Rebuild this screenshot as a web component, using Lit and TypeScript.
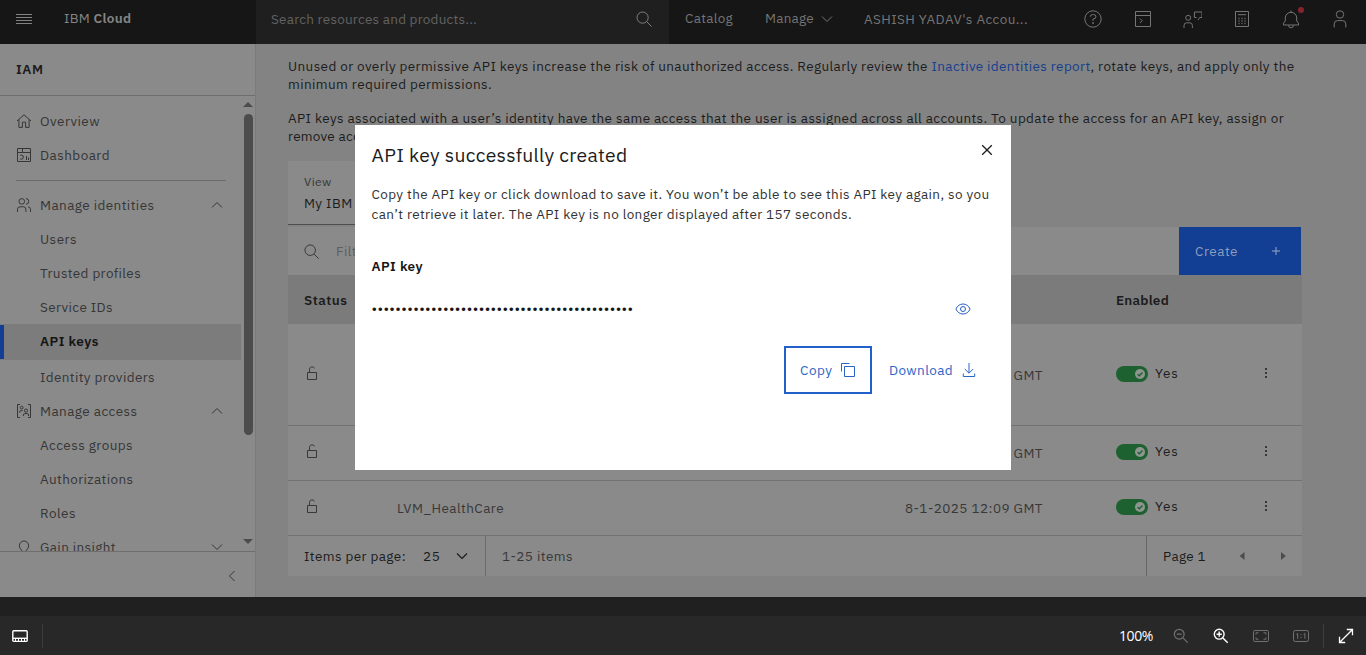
import { LitElement, html, svg, css, nothing } from "lit";
import { customElement, property } from "lit/decorators.js";

/** Inline label whose tracking is adjusted so the text spans a given width. */
@customElement("fit-text")
class FitText extends LitElement {
  @property() text = "";
  @property({ type: Number }) w = 0;
  static styles = css`
    :host { display: inline-block; white-space: pre; }
  `;
  firstUpdated() {
    const span = this.renderRoot.querySelector("span")!;
    const natural = span.getBoundingClientRect().width;
    const n = [...this.text].length;
    if (this.w) span.style.letterSpacing = `${((this.w - natural) / n).toFixed(4)}px`;
  }
  render() {
    return html`<span>${this.text}</span>`;
  }
}

const t = (text: string, w: number, cls = "") =>
  html`<fit-text class=${cls} .text=${text} .w=${w}></fit-text>`;

const shapes: Record<string, unknown> = {
  menu: svg`<path d="M0 2.5h16M0 5.5h16M0 8.5h16M0 11.5h16" />`,
  search: svg`<circle cx="6.6" cy="6.6" r="5.6"/><path d="M10.7 10.7L15.6 15.6"/>`,
  down: svg`<path d="M3 5.5l5 5 5-5"/>`,
  up: svg`<path d="M3 10.5l5-5 5 5"/>`,
  left: svg`<path d="M10.5 3l-5 5 5 5"/>`,
  close: svg`<path d="M3.2 3.2l9.6 9.6M12.8 3.2L3.2 12.8"/>`,
  plus: svg`<path d="M8 4v8M4 8h8"/>`,
  help: svg`<circle cx="10" cy="10" r="8.2"/><path d="M7.4 8V7.4A1.9 1.9 0 0 1 9.3 5.6h1.5a1.9 1.9 0 0 1 0 4.2H10v2"/><circle cx="10" cy="14" r=".5" fill="currentColor"/>`,
  shell: svg`<path d="M2.5 2.5h15v15h-15zM2.5 6.5h15M7 9.5l2.2 2.2L7 13.9"/>`,
  feedback: svg`<circle cx="6.2" cy="8.8" r="2.5"/><path d="M2 19v-2.500a2.700 2.700 0 0 1 2.700-2.700h3a2.700 2.700 0 0 1 2.700 2.700V19M14.500 8.500h-2.100v-5.500h7.600v5.500h-2.300l-1.700 2.600"/>`,
  calc: svg`<path d="M3.500 2.500h13v15h-13zM6 5.700h8"/><path d="M6.500 9.500h1M9.500 9.500h1M12.500 9.500h1M6.500 12h1M9.500 12h1M12.500 12h1M6.500 14.500h1M9.500 14.500h1M12.500 14.500h1" stroke-width="1.300"/>`,
  bell: svg`<path d="M10 1.500v2M2.500 16h15v-1.800L15.700 12V9a5.700 5.700 0 0 0-11.400 0v3l-1.800 2.200zM7.600 16v.4a2.400 2.400 0 0 0 4.800 0V16"/>`,
  user: svg`<circle cx="10" cy="5.500" r="3.700"/><path d="M4.200 18.500V15a3.400 3.400 0 0 1 3.400-3.400h4.800a3.400 3.400 0 0 1 3.400 3.400v3.500"/>`,
  home: svg`<path d="M1 8l7-6.200L15 8M2.900 6.500v7.900h3.500V9.200h3.200v5.200h3.500V6.500"/>`,
  dash: svg`<path d="M1.500 1.500h13v13h-13zM1.500 5.500h13M6.500 1.500v4M10.500 9v4M12.500 10.500V13M4 8.200h1.500a1.900 1.900 0 0 1 0 3.900H4.200"/>`,
  users: svg`<circle cx="5.800" cy="4.400" r="2.800"/><path d="M1.500 15v-2.700a2.500 2.500 0 0 1 2.500-2.500h3.400a2.500 2.500 0 0 1 2.500 2.500V15M10 1.600a2.800 2.800 0 0 1 0 5.600M12 9.800a2.600 2.600 0 0 1 2.500 2.500V15"/>`,
  access: svg`<path d="M4 1.500H1.500v13H4M12 1.500h2.500v13H12"/><circle cx="5.700" cy="4.600" r="1.400"/><path d="M3.600 9.700V8.900a1.200 1.200 0 0 1 1.200-1.200h1.700"/><circle cx="10" cy="7.600" r="1.600"/><path d="M7.400 13v-1a1.400 1.400 0 0 1 1.400-1.400h2.400a1.400 1.400 0 0 1 1.400 1.400v1"/>`,
  idea: svg`<path d="M5.700 12.300V11.200C4.300 9.900 3.400 8.700 3.400 6.600a4.600 4.600 0 0 1 9.200 0c0 2.100-.9 3.300-2.300 4.600v1.100M6 14h4"/>`,
  lock: svg`<path d="M3.500 7.500h9v7h-9zM5.500 7.500V4.200a2.600 2.600 0 0 1 5-.8"/>`,
  kebab: svg`<path d="M7 3h2v2H7zM7 7h2v2H7zM7 11h2v2H7z" fill="currentColor" stroke="none"/>`,
  caretL: svg`<path d="M10.500 4v8L5.700 8z" fill="currentColor" stroke="none"/>`,
  caretR: svg`<path d="M6 4v8l4.800-4z" fill="currentColor" stroke="none"/>`,
  eye: svg`<path d="M.9 8C2.300 4.800 4.900 3 8 3s5.700 1.800 7.100 5c-1.400 3.200-4 5-7.100 5S2.300 11.200.9 8z"/><circle cx="8" cy="8" r="2.500"/>`,
  copy: svg`<path d="M4.500 4.500h10v10h-10zM1.500 9.500v-8h8"/>`,
  download: svg`<path d="M8 1v10M3.800 7L8 11.200 12.200 7M2.300 11.500v3h11.400v-3"/>`,
  film: svg`<rect x=".8" y="2.800" width="14.400" height="10.600" rx="1"/><path d="M1 10.300h14"/><path d="M3.500 10.500v3M6.500 10.500v3M9.500 10.500v3M12.500 10.500v3" stroke-width="1"/>`,
  zoomOut: svg`<circle cx="6.200" cy="6.200" r="4.900"/><path d="M9.900 9.900l4.800 4.800M3.800 6.200h4.800"/>`,
  zoomIn: svg`<circle cx="6.200" cy="6.200" r="4.900"/><path d="M9.900 9.900l4.800 4.800M3.600 6.200h5.200M6.200 3.600v5.200"/>`,
  fit: svg`<rect x=".5" y="2.500" width="15" height="11" rx="1.200"/><path d="M3 6.500V4.800h2.500M10.500 4.800H13v1.700M13 9.500v1.700h-2.500M5.500 11.200H3V9.500"/>`,
  actual: svg`<rect x=".5" y="2.500" width="15" height="11" rx="1.800"/><path d="M3.400 6.300l1.300-.8v5.200M10.600 6.300l1.300-.8v5.200"/><path d="M7.500 6.200h1v1h-1zM7.500 9h1v1h-1z" fill="currentColor" stroke="none"/>`,
  expand: svg`<path d="M2 14L14.300 1.700M8.800 1.500h5.700v5.700M1.500 8.800v5.700h5.700"/>`,
};
const icon = (name: string, size = 16, cls = "", sw = 1, box = size === 20 ? 20 : 16) =>
  html`<svg class="ic ${cls}" width=${size} height=${size} viewBox="0 0 ${box} ${box}" fill="none" stroke="currentColor" stroke-width=${sw}>${shapes[name]}</svg>`;

type Nav = { label: string; w: number; icon?: string; chev?: string; active?: boolean };
const top: Nav[] = [
  { label: "Overview", w: 60, icon: "home" },
  { label: "Dashboard", w: 70, icon: "dash" },
];
const groups: Nav[] = [
  { label: "Manage identities", w: 114.5, icon: "users", chev: "up" },
  { label: "Users", w: 37 },
  { label: "Trusted profiles", w: 101 },
  { label: "Service IDs", w: 73 },
  { label: "API keys", w: 59, active: true },
  { label: "Identity providers", w: 115 },
  { label: "Manage access", w: 97.5, icon: "access", chev: "up" },
  { label: "Access groups", w: 93 },
  { label: "Authorizations", w: 93.5 },
  { label: "Roles", w: 36 },
  { label: "Gain insight", w: 76, icon: "idea", chev: "down" },
];
const rows = ["Healthcare_API", "LVM_Service", "LVM_HealthCare"];

@customElement("app-root")
class AppRoot extends LitElement {
  static styles = css`
    :host { display: block; width: 1366px; height: 655px; overflow: hidden; position: relative;
      font-family: "IBM Plex Sans", "Noto Sans", sans-serif; font-size: 13.5px; line-height: 18px; color: #1c1c1c; background: #202020; }
    * { box-sizing: border-box; }
    .ic { display: block; flex: none; }
    .page { height: 597px; display: flex; flex-direction: column; background: #838383; }
    .top { height: 44px; flex: none; display: flex; background: #161616; color: #757575; }
    .brand { width: 256px; display: flex; padding: 10px 0 0 16px; line-height: 17px; }
    .brand .ic { margin: 2px 32px 0 0; color: #828282; }
    .brand b { font-weight: 600; }
    .brand fit-text { color: #858585; }
    .find { width: 413px; background: #1f1f1f; padding: 10px 17px 0 15px; display: flex; justify-content: space-between; color: #626262; }
    .find .ic { color: #808080; margin-top: 1px; }
    .links { flex: 1; display: flex; padding: 9px 0 0 16px; }
    .links .acct { margin: 1px 0 0 29px; }
    .links .ic { margin: 2px 0 0 5px; }
    .mng { margin-left: 32px; }
    .tools { width: 292px; display: grid; grid-template-columns: 50px 49px 50px 49px 49px 20px; padding: 9px 0 0 9px; }
    .bellbox { position: relative; width: 20px; }
    .dot { position: absolute; right: -3px; top: -2px; width: 6px; height: 6px; border-radius: 50%; background: #84252b; }
    .body { flex: 1; display: flex; min-height: 0; }
    .side { width: 256px; background: #8a8a8a; border-right: 1px solid #7a7a7a; display: flex; flex-direction: column; color: #363636; }
    .sidehead { height: 52px; flex: none; border-bottom: 1px solid #6e6e6e; padding: 16px; font-weight: 600; color: #1c1c1c; }
    .navwrap { flex: 1; min-height: 0; display: flex; overflow: hidden; }
    .nav { width: 241px; padding-top: 8px; }
    .row { height: 34px; display: flex; align-items: center; padding: 0 16px; }
    .row .slot { width: 24px; flex: none; }
    .row .chev { margin-left: auto; }
    .row.active { height: 36px; background: #7c7c7c; color: #141414; font-weight: 600; padding-left: 0; }
    .row.active .bar { width: 4px; height: 34px; background: #123f94; margin-right: 36px; }
    .row.active fit-text { margin-bottom: 2px; }
    .sep { height: 1px; background: #6c6c6c; margin: 8px 15px 7px 16px; }
    .scroll { width: 14px; display: flex; flex-direction: column; align-items: center; padding: 6px 0 7px; }
    .tri { border: 5px solid transparent; border-top: 0; border-bottom: 5px solid #4c4c4c; }
    .tri.d { border-top: 5px solid #4c4c4c; border-bottom: 0; margin-top: auto; }
    .thumb { width: 9px; height: 321px; border-radius: 5px; background: #4c4c4c; margin-top: 7px; }
    .sidefoot { height: 46px; flex: none; border-top: 1px solid #6e6e6e; display: flex; justify-content: flex-end; align-items: center; padding: 2px 15px 0 0; }
    .main { flex: 1; padding: 13px 64px 0 32px; display: flex; flex-direction: column; }
    .para { height: 36px; margin-bottom: 16px; white-space: nowrap; flex: none; }
    .line { display: flex; height: 18px; }
    .link { color: #163f8f; }
    .view { width: 300px; height: 64px; flex: none; background: #8a8a8a; border-bottom: 1px solid #4e4e4e; padding: 12px 16px; margin-bottom: 2px; }
    .view small { display: block; font-size: 12px; height: 21px; color: #363636; }
    .bar2 { height: 48px; background: #8a8a8a; display: flex; align-items: center; padding-left: 16px; margin-right: 1px; flex: none; color: #5f5f5f; }
    .bar2 .ic { color: #333; margin-right: 17px; }
    .create { margin-left: auto; width: 122px; height: 48px; background: #123f94; color: #8d9dbd; display: flex; align-items: center; justify-content: space-between; padding: 0 17px 0 16px; }
    .create .ic { margin: 0; color: #98a6c4; }
    .grid { display: grid; grid-template-columns: 93px 508px 211px 142px 60px; align-items: center; background: #8a8a8a; padding-left: 16px; border-bottom: 1px solid #727272; height: 55px; color: #383838; flex: none; width: 1014px; }
    .grid fit-text, .grid .ic { display: block; }
    .grid.head { height: 49px; background: #7b7b7b; border: 0; font-weight: 600; color: #1c1c1c; }
    .grid.tall { height: 102px; }
    .up3 { margin-bottom: 5px; }
    .tall .up3 { margin-bottom: 3px; }
    .sw { display: flex; align-items: center; color: #1e1e1e; margin-bottom: 2px; }
    .sw fit-text { margin: -3px 0 0 7px; }
    .tall .sw fit-text { margin-top: -1px; }
    .toggle { width: 32px; height: 16px; border-radius: 8px; background: #1d6130; display: flex; justify-content: flex-end; padding: 3px; }
    .knob { width: 10px; height: 10px; border-radius: 50%; background: #8e958f; display: flex; }
    .pager { width: 1014px; height: 40px; flex: none; background: #8a8a8a; display: flex; line-height: 40px; padding-left: 16px; }
    .pager .ic { margin-top: 12px; }
    .per { width: 182px; display: flex; border-right: 1px solid #6c6c6c; }
    .per .n { margin-left: 17px; }
    .per .ic { margin-left: 13px; }
    .cnt { color: #383838; flex: 1; padding-left: 16px; }
    .pg { width: 156px; border-left: 1px solid #666; padding-left: 16px; display: flex; }
    .pg .ic { color: #4b4b4b; margin-left: 28px; }
    .pg .ic + .ic { margin-left: 25px; }

    .modal { position: absolute; left: 355px; top: 125px; width: 656px; height: 345px; background: #fff; padding: 16px 16px 0 16.5px; color: #323232; }
    .mhead { display: flex; justify-content: space-between; height: 43px; color: #1c1c1c; }
    .mhead .title { font-size: 19.3px; line-height: 28px; }
    .mhead .ic { margin-top: 1px; }
    .mtext { line-height: 20px; height: 40px; }
    .mtext fit-text { display: block; }
    .mlabel { font-weight: 600; color: #161616; margin-top: 33px; height: 18px; }
    .secret { display: flex; justify-content: space-between; align-items: center; height: 20px; margin-top: 24px; padding-right: 24px; color: #2460c4; }
    .secret fit-text { color: #161616; font-size: 14px; }
    .acts { display: flex; justify-content: flex-end; margin-top: 27px; padding-right: 18px; color: #2a65c8; }
    .btn { height: 48px; display: flex; align-items: center; }
    .btn .ic { margin-left: 8px; }
    .btn.focus { width: 88px; border: 2px solid #2460cc; padding-left: 14px; margin-right: 17px; }
    .btn.focus .ic { margin-left: 7px; }

    .view-bar { height: 58px; border-top: 19px solid #202020; background: #282828; display: flex; align-items: center; color: #fff; padding: 1px 12px 0; }
    .view-bar .vs { width: 1px; height: 24px; background: #3e3e3e; margin-left: 14px; }
    .view-bar .right { margin-left: auto; display: flex; align-items: center; font-family: "Open Sans", sans-serif; font-size: 14px; }
    .view-bar .right .ic { margin-left: 24px; }
    .view-bar .right .ic.first { margin-left: 20px; }
    .view-bar .dim { color: #717171; }
    .view-bar .right .vs { margin-left: 14px; }
    .view-bar .right .vs + .ic { margin-left: 14px; }
  `;

  nav(i: Nav) {
    return html`<div class="row ${i.active ? "active" : ""}">
      ${i.active ? html`<div class="bar"></div>` : html`<div class="slot">${i.icon ? icon(i.icon) : nothing}</div>`}
      ${t(i.label, i.w)}${i.chev ? icon(i.chev, 16, "chev") : nothing}
    </div>`;
  }

  render() {
    return html`
      <div class="page">
        <header class="top">
          <div class="brand">${icon("menu")}${t("IBM ", 29.5)}<b>${t("Cloud", 38)}</b></div>
          <div class="find">${t("Search resources and products...", 206)}${icon("search")}</div>
          <div class="links">${t("Catalog", 48)}<span class="mng">${t("Manage", 49)}</span>${icon("down")}${t("ASHISH YADAV's Accou...", 164, "acct")}</div>
          <div class="tools">
            ${icon("help", 20)}${icon("shell", 20)}${icon("feedback", 20)}${icon("calc", 20)}
            <div class="bellbox">${icon("bell", 20)}<i class="dot"></i></div>${icon("user", 20)}
          </div>
        </header>
        <div class="body">
          <aside class="side">
            <div class="sidehead">${t("IAM", 27.5)}</div>
            <div class="navwrap">
              <nav class="nav">${top.map((i) => this.nav(i))}<div class="sep"></div>${groups.map((i) => this.nav(i))}</nav>
              <div class="scroll"><i class="tri"></i><i class="thumb"></i><i class="tri d"></i></div>
            </div>
            <div class="sidefoot">${icon("left")}</div>
          </aside>
          <main class="main">
            <div class="para">
              <div class="line">${t("Unused or overly permissive API keys increase the risk of unauthorized access. Regularly review the ", 643.5)}${t("Inactive identities report", 159, "link")}${t(", rotate keys, and apply only the", 204)}</div>
              <div class="line">${t("minimum required permissions.", 204)}</div>
            </div>
            <div class="para">
              <div class="line">${t("API keys associated with a user’s identity have the same access that the user is assigned across all accounts. To update the access for an API key, assign or", 996)}</div>
              <div class="line">${t("remove access.", 97)}</div>
            </div>
            <div class="view"><small>${t("View", 27.5)}</small>${t("My IBM", 48.5)}</div>
            <div class="bar2">${icon("search", 15)}${t("Filter", 34)}
              <div class="create">${t("Create", 43)}${icon("plus")}</div></div>
            <div class="grid head">${t("Status", 43.5)}<span></span><span></span>${t("Enabled", 53)}</div>
            ${rows.map((name, i) => html`<div class="grid ${i === 0 ? "tall" : ""}">
              <div class="up3">${icon("lock")}</div>
              ${t(name, i === 2 ? 107 : 0)}
              ${t("8-1-2025 12:09 GMT", 138)}
              <div class="sw"><div class="toggle"><div class="knob"><svg width="10" height="10" viewBox="0 0 10 10" fill="none" stroke="#1d6130" stroke-width="1.400"><path d="M2.600 5.200l1.700 1.600 3.200-3.400"/></svg></div></div>${t("Yes", 23.5)}</div>
              <div class="up3">${icon("kebab")}</div></div>`)}
            <div class="pager">
              <div class="per">${t("Items per page:", 102)}${t("25", 17.5, "n")}${icon("down", 16, "", 1.2)}</div>
              <div class="cnt">${t("1-25 items", 71)}</div>
              <div class="pg">${t("Page 1", 43)}${icon("caretL")}${icon("caretR")}</div>
            </div>
          </main>
        </div>
      </div>
      <footer class="view-bar">
        ${icon("film", 16, "", 1.4)}<i class="vs"></i>
        <div class="right">${t("100%", 34)}${icon("zoomOut", 16, "first dim", 1.2)}${icon("zoomIn", 16, "", 1.4)}${icon("fit", 16, "dim")}${icon("actual", 16, "dim")}<i class="vs"></i>${icon("expand", 16, "", 1.3)}</div>
      </footer>
      <section class="modal">
        <div class="mhead">${t("API key successfully created", 256, "title")}${icon("close", 16, "", 1.3)}</div>
        <div class="mtext">
          ${t("Copy the API key or click download to save it. You won’t be able to see this API key again, so you", 618)}
          ${t("can’t retrieve it later. The API key is no longer displayed after 157 seconds.", 480.5)}
        </div>
        <div class="mlabel">${t("API key", 51.5)}</div>
        <div class="secret">${t("•".repeat(44), 262)}${icon("eye")}</div>
        <div class="acts">
          <div class="btn focus">${t("Copy", 32.5)}${icon("copy")}</div>
          <div class="btn">${t("Download", 64)}${icon("download")}</div>
        </div>
      </section>`;
  }
}
